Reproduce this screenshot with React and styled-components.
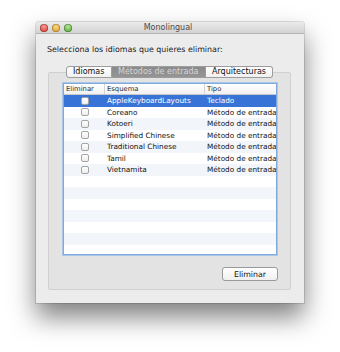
import React from 'react';
import styled, { createGlobalStyle } from 'styled-components';

const GlobalStyle = createGlobalStyle`
  body {
    margin: 0;
    background: #ffffff;
    font-family: "DejaVu Sans", "Liberation Sans", sans-serif;
  }
`;

const Page = styled.div`
  width: 340px;
  height: 352px;
  padding: 22px 0 0 36px;
  box-sizing: border-box;
  overflow: hidden;
`;

const Window = styled.div`
  width: 268px;
  height: 281px;
  background: #ececec;
  border-radius: 3px 3px 0 0;
  box-shadow: 0 14px 26px rgba(0, 0, 0, 0.5), 0 0 0 1px rgba(0, 0, 0, 0.12);
  display: flex;
  flex-direction: column;
`;

const TitleBar = styled.div`
  height: 14px;
  display: flex;
  align-items: center;
  padding: 0 4px;
  background: linear-gradient(#ebebeb, #d2d2d2);
  border-bottom: 1px solid #b4b4b4;
  border-radius: 3px 3px 0 0;
`;

const Lights = styled.div`
  display: flex;
  gap: 4px;
  width: 40px;
`;

const Light = styled.span`
  width: 8px;
  height: 8px;
  border-radius: 50%;
  background: radial-gradient(circle at 50% 35%, ${p => p.$hi} 0%, ${p => p.$c} 70%);
  box-shadow: inset 0 0 0 0.5px rgba(0, 0, 0, 0.35);
`;

const Title = styled.div`
  flex: 1;
  text-align: center;
  margin-right: 44px;
  font-size: 8px;
  color: #4a4a4a;
`;

const Content = styled.div`
  flex: 1;
  display: flex;
  flex-direction: column;
  padding: 10px 13px 13px 12px;
`;

const Prompt = styled.div`
  font-size: 7.9px;
  line-height: 11px;
  color: #1a1a1a;
  margin-left: -1px;
`;

const TabStrip = styled.div`
  display: flex;
  justify-content: center;
  margin-top: 11px;
  margin-bottom: -6px;
  position: relative;
  z-index: 1;
`;

const Tab = styled.div`
  height: 10px;
  line-height: 10px;
  font-size: 8px;
  padding: 0 ${p => p.$pad}px;
  border: 1px solid #9c9c9c;
  border-left-width: ${p => (p.$first ? 1 : 0)}px;
  border-radius: ${p => (p.$first ? '3px 0 0 3px' : p.$last ? '0 3px 3px 0' : '0')};
  background: ${p => (p.$active ? 'linear-gradient(#8a8a8a, #959595)' : 'linear-gradient(#ffffff, #f0f0f0)')};
  color: ${p => (p.$active ? '#d6d6d6' : '#111')};
`;

const GroupBox = styled.div`
  flex: 1;
  display: flex;
  flex-direction: column;
  padding: 10px 13px 8px 14px;
  background: #e3e3e3;
  border: 1px solid #d0d0d0;
  border-radius: 2px;
`;

const Table = styled.div`
  height: 170px;
  background: #ffffff;
  border: 1px solid #80a9dc;
  box-shadow: 0 0 0 1px #a9c6ea;
  overflow: hidden;
  display: flex;
  flex-direction: column;
`;

const Header = styled.div`
  display: grid;
  grid-template-columns: 40px 100px 1fr;
  height: 10px;
  background: linear-gradient(#ffffff, #f1f1f1);
  border-bottom: 1px solid #c8c8c8;
`;

const HeaderCell = styled.div`
  font-size: 6.8px;
  line-height: 10px;
  color: #2c2c2c;
  padding-left: 2px;
  border-left: ${p => (p.$first ? 'none' : '1px solid #d4d4d4')};
`;

const Row = styled.div`
  display: grid;
  grid-template-columns: 40px 100px 1fr;
  height: 11.5px;
  flex-shrink: 0;
  align-items: center;
  background: ${p => (p.$selected ? '#3874d7' : p.$stripe ? '#f2f5fa' : '#ffffff')};
  color: ${p => (p.$selected ? '#ffffff' : '#111111')};
`;

const Cell = styled.div`
  font-size: 7.3px;
  padding-left: 3px;
  white-space: nowrap;
  overflow: hidden;
`;

const CheckCell = styled.div`
  display: flex;
  justify-content: center;
  padding-left: 2px;
`;

const Checkbox = styled.span`
  width: 8px;
  height: 8px;
  border: 1px solid #a4a4a4;
  border-radius: 2px;
  background: linear-gradient(#ffffff, #ededed);
  box-sizing: border-box;
`;

const Footer = styled.div`
  display: flex;
  justify-content: flex-end;
  margin-top: 12px;
`;

const Button = styled.button`
  width: 56px;
  height: 14px;
  padding: 0;
  font-family: inherit;
  font-size: 7.8px;
  color: #111;
  background: linear-gradient(#ffffff, #f0f0f0);
  border: 1px solid #9a9a9a;
  border-radius: 3px;
  margin-right: -1px;
`;

const rows = [
  ['AppleKeyboardLayouts', 'Teclado'],
  ['Coreano', 'Método de entrada'],
  ['Kotoeri', 'Método de entrada'],
  ['Simplified Chinese', 'Método de entrada'],
  ['Traditional Chinese', 'Método de entrada'],
  ['Tamil', 'Método de entrada'],
  ['Vietnamita', 'Método de entrada'],
];

const fillers = Array.from({ length: 8 });

export default function App() {
  return (
    <>
      <GlobalStyle />
      <Page>
        <Window>
          <TitleBar>
            <Lights>
              <Light $c="#d9443c" $hi="#f7a49c" />
              <Light $c="#e0a431" $hi="#f8dc8c" />
              <Light $c="#5fae3d" $hi="#bde7a0" />
            </Lights>
            <Title>Monolingual</Title>
          </TitleBar>
          <Content>
            <Prompt>Selecciona los idiomas que quieres eliminar:</Prompt>
            <TabStrip>
              <Tab $first $pad={6.3}>Idiomas</Tab>
              <Tab $active $pad={6.3}>Métodos de entrada</Tab>
              <Tab $last $pad={6.3}>Arquitecturas</Tab>
            </TabStrip>
            <GroupBox>
              <Table>
                <Header>
                  <HeaderCell $first>Eliminar</HeaderCell>
                  <HeaderCell>Esquema</HeaderCell>
                  <HeaderCell>Tipo</HeaderCell>
                </Header>
                {rows.map(([name, kind], i) => (
                  <Row key={name} $selected={i === 0} $stripe={i % 2 === 0}>
                    <CheckCell><Checkbox /></CheckCell>
                    <Cell>{name}</Cell>
                    <Cell>{kind}</Cell>
                  </Row>
                ))}
                {fillers.map((_, i) => (
                  <Row key={'f' + i} $stripe={(i + rows.length) % 2 === 0} />
                ))}
              </Table>
              <Footer>
                <Button>Eliminar</Button>
              </Footer>
            </GroupBox>
          </Content>
        </Window>
      </Page>
    </>
  );
}
